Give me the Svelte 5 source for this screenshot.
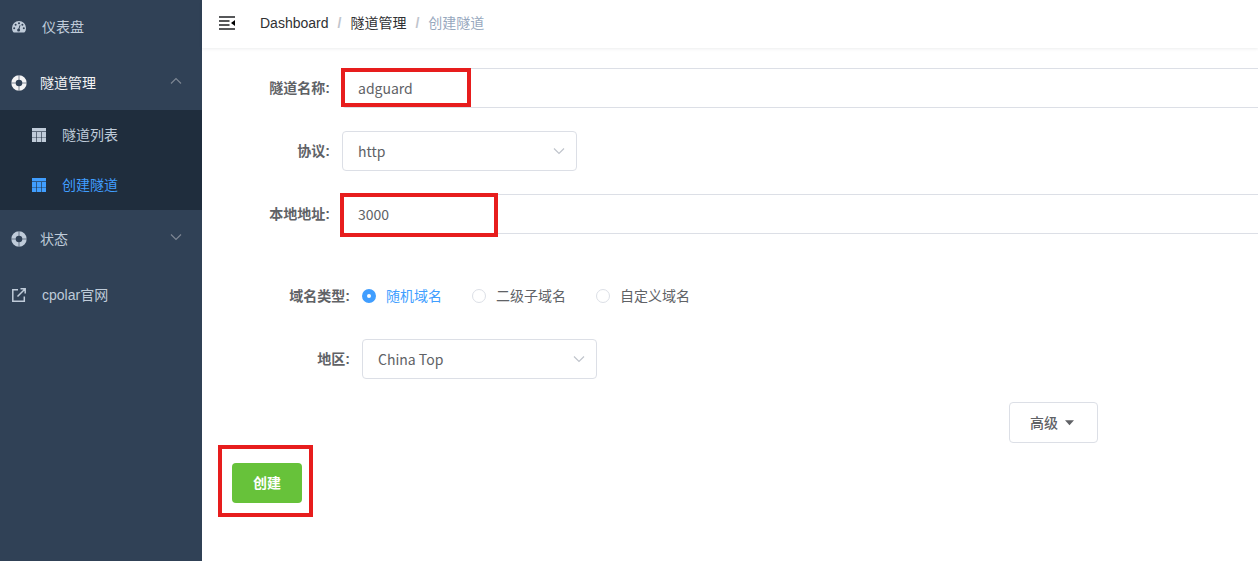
<script>
  let name = $state('adguard');
  let protocol = $state('http');
  let address = $state('3000');
  let domain = $state('random');
  let region = $state('cn_top');
  const domains = [
    { value: 'random', label: '随机域名' },
    { value: 'sub', label: '二级子域名' },
    { value: 'custom', label: '自定义域名' },
  ];
</script>

{#snippet ring()}
  <svg class="ring" viewBox="0 0 16 16" aria-hidden="true">
    <circle cx="8" cy="8" r="5.5" fill="none" stroke="currentColor" stroke-width="4.4" />
    <path d="M8 0v5M8 11v5M0 8h5M11 8h5" stroke="#304156" stroke-width="1" opacity=".6" />
  </svg>
{/snippet}

{#snippet grid()}
  <svg class="grid" viewBox="0 0 14 14" aria-hidden="true">
    <path fill="currentColor" d="M0 0h14v14H0z" />
    <path fill="#1f2d3d" opacity=".6" d="M0 3h14v1H0zM4 4h1v10H4zM9 4h1v10H9z" />
    <path fill="#1f2d3d" opacity=".4" d="M0 9h14v1H0z" />
  </svg>
{/snippet}

{#snippet chevron(up)}
  <svg class="chevron" viewBox="0 0 12 12" aria-hidden="true">
    <path d={up ? 'M1 8.500L6 3.500l5 5' : 'M1 3.500l5 5 5-5'} fill="none" stroke="currentColor" stroke-width="1.2" />
  </svg>
{/snippet}

<div class="app">
  <nav class="sidebar">
    <a class="item" href="#dashboard">
      <svg class="gauge" viewBox="0 0 14 12" aria-hidden="true">
        <path fill="currentColor" d="M7 0a7 7 0 0 0-7 7c0 1.500.4 2.900 1.100 4.100.2.300.5.500.8.500h10.200c.3 0 .6-.2.8-.5A7.500 7.500 0 0 0 14 7a7 7 0 0 0-7-7z" />
        <g fill="#304156">
          <circle cx="2.200" cy="7.300" r="1" /><circle cx="3.600" cy="3.800" r="1" />
          <circle cx="7" cy="2.300" r="1" /><circle cx="10.400" cy="3.800" r="1" />
          <circle cx="11.800" cy="7.300" r="1" /><circle cx="6.600" cy="8.900" r="1.500" />
        </g>
        <path d="M6.700 8.700L8 4.300" stroke="#304156" stroke-width="1" />
      </svg>
      <span>仪表盘</span>
    </a>
    <button class="item group open" type="button">
      {@render ring()}<span>隧道管理</span>{@render chevron(true)}
    </button>
    <div class="submenu">
      <a href="#list">{@render grid()}<span>隧道列表</span></a>
      <a href="#create" class="active">{@render grid()}<span>创建隧道</span></a>
    </div>
    <button class="item group" type="button">
      {@render ring()}<span>状态</span>{@render chevron(false)}
    </button>
    <a class="item" href="#site">
      <svg class="external" viewBox="0 0 14 14" aria-hidden="true">
        <path d="M6 1.700H.8v11.500h11.500V8.500M5.500 8.500L12.500 1.500M8.500.8h4.700v4.700" fill="none" stroke="currentColor" stroke-width="1.500" />
      </svg>
      <span>cpolar官网</span>
    </a>
  </nav>

  <div class="content">
    <header>
      <button class="fold" type="button" aria-label="折叠菜单">
        <svg viewBox="0 0 16 14" aria-hidden="true">
          <path d="M0 1h16M0 5h10.500M0 9h10.500M0 13h16" stroke="#1f2023" stroke-width="1.600" />
          <path d="M16 4v6l-4-3z" fill="#000" />
        </svg>
      </button>
      <div class="crumbs">
        <a href="#dashboard">Dashboard</a><i>/</i><a href="#tunnels">隧道管理</a><i>/</i><span>创建隧道</span>
      </div>
    </header>

    <main>
      <form onsubmit={(e) => e.preventDefault()}>
        <div class="row">
          <label for="name">隧道名称:</label>
          <div class="field wide"><input id="name" type="text" bind:value={name} /><div class="mark mark-name"></div></div>
        </div>
        <div class="row">
          <label for="protocol">协议:</label>
          <div class="field select">
            <select id="protocol" bind:value={protocol}><option value="http">http</option><option value="tcp">tcp</option></select>
            {@render chevron(false)}
          </div>
        </div>
        <div class="row">
          <label for="address">本地地址:</label>
          <div class="field wide"><input id="address" type="text" bind:value={address} /><div class="mark mark-address"></div></div>
        </div>

        <div class="nested">
          <div class="row" role="radiogroup" aria-labelledby="domain-label">
            <span class="label" id="domain-label">域名类型:</span>
            <div class="radios">
              {#each domains as d}
                <label class:checked={domain === d.value}>
                  <input type="radio" name="domain" value={d.value} bind:group={domain} />{d.label}
                </label>
              {/each}
            </div>
          </div>
          <div class="row">
            <label for="region">地区:</label>
            <div class="field select">
              <select id="region" bind:value={region}><option value="cn_top">China Top</option><option value="us">United States</option></select>
              {@render chevron(false)}
            </div>
          </div>
        </div>

        <div class="advanced">
          <button type="button">高级
            <svg viewBox="0 0 10 6" aria-hidden="true"><path d="M0 0h10L5 5.500z" fill="currentColor" /></svg>
          </button>
        </div>
        <div class="actions">
          <button type="submit">创建</button>
          <div class="mark mark-submit"></div>
        </div>
      </form>
    </main>
  </div>
</div>

<style>
  :global(body) { background: #fff; }
  .app {
    display: flex;
    min-height: 100vh;
    overflow: hidden;
    color: #606266;
    font: 14px/20px "Liberation Sans", "Noto Sans CJK SC", sans-serif;
  }
  .app * { box-sizing: border-box; }
  button, input, select { font: inherit; color: inherit; margin: 0; }
  a { text-decoration: none; color: inherit; }

  .sidebar { flex: 0 0 202px; background: #304156; color: #bfcbd9; }
  .item {
    display: flex;
    align-items: center;
    width: 100%;
    height: 56px;
    padding: 2px 20px 0 12px;
    border: 0;
    background: none;
    text-align: left;
  }
  .item:first-child { height: 54px; padding-top: 0; }
  .item span { margin-left: 16px; }
  .item.group { padding-left: 11px; }
  .item.group span { margin-left: 13px; }
  .open { color: #f4f4f5; }
  .gauge { width: 14px; height: 12px; }
  .ring { width: 16px; height: 16px; }
  .external { width: 14px; height: 14px; }
  .chevron { width: 12px; height: 12px; }
  .item .chevron { margin: 0 0 4px auto; color: #7d8693; }
  .submenu { background: #1f2d3d; }
  .submenu a { display: flex; align-items: center; height: 50px; padding-left: 32px; gap: 16px; }
  .submenu .active { color: #409eff; }
  .grid { width: 14px; height: 14px; }

  .content { flex: 1; min-width: 0; }
  header {
    display: flex;
    align-items: center;
    height: 48px;
    padding: 0 17px 3px;
    gap: 25px;
    box-shadow: 0 1px 3px rgba(0, 21, 41, 0.08);
  }
  .fold { display: flex; padding: 0; border: 0; background: none; }
  .fold svg { width: 16px; height: 14px; }
  .crumbs { display: flex; color: #97a8be; white-space: nowrap; }
  .crumbs a { color: #303133; }
  .crumbs i { margin: 0 9px; font-style: normal; color: #c0c4cc; font-weight: 700; }

  main { padding: 20px 0 20px 30px; }
  .row { display: flex; margin-bottom: 23px; }
  .row > label, .label {
    flex: 0 0 110px;
    padding-right: 12px;
    line-height: 40px;
    text-align: right;
    font-weight: 700;
  }
  .nested { margin-top: 42px; padding-left: 20px; }
  .field { position: relative; font-family: "Noto Sans CJK SC", sans-serif; }
  .wide { flex: 1; min-width: 0; }
  .field input, .field select {
    display: block;
    width: 100%;
    height: 40px;
    padding: 0 15px;
    border: 1px solid #dcdfe6;
    border-radius: 4px;
    background: #fff;
    outline: 0;
  }
  .wide input { border-right: 0; border-radius: 4px 0 0 4px; }
  .select { flex: 0 1 235px; }
  .field select { appearance: none; }
  .select .chevron { position: absolute; top: 14px; right: 12px; color: #c0c4cc; pointer-events: none; }
  .radios { display: flex; gap: 30px; }
  .radios label { display: flex; align-items: center; gap: 10px; height: 40px; font-weight: 400; }
  .radios .checked { color: #409eff; }
  .radios input {
    appearance: none;
    width: 14px;
    height: 14px;
    border: 1px solid #dcdfe6;
    border-radius: 50%;
    background: #fff;
  }
  .radios input:checked { border: 5px solid #409eff; }

  .advanced { display: flex; justify-content: flex-end; padding-right: 160px; }
  .advanced button {
    display: flex;
    align-items: center;
    gap: 7px;
    height: 41px;
    padding: 0 23px 0 20px;
    border: 1px solid #dcdfe6;
    border-radius: 4px;
    background: #fff;
    font-weight: 500;
  }
  .advanced svg { width: 9px; height: 6px; }
  .actions { position: relative; display: flex; margin-top: 20px; }
  .actions button {
    width: 70px;
    height: 40px;
    border: 0;
    border-radius: 4px;
    background: #67c23a;
    color: #fff;
    font-weight: 700;
  }
  .mark { position: absolute; border: 4px solid #e71d1d; pointer-events: none; }
  .mark-name { left: -1px; top: 0; width: 130px; height: 39px; }
  .mark-address { left: -2px; top: -1px; width: 158px; height: 44px; }
  .mark-submit { left: -14px; top: -18px; width: 95px; height: 72px; }
</style>
